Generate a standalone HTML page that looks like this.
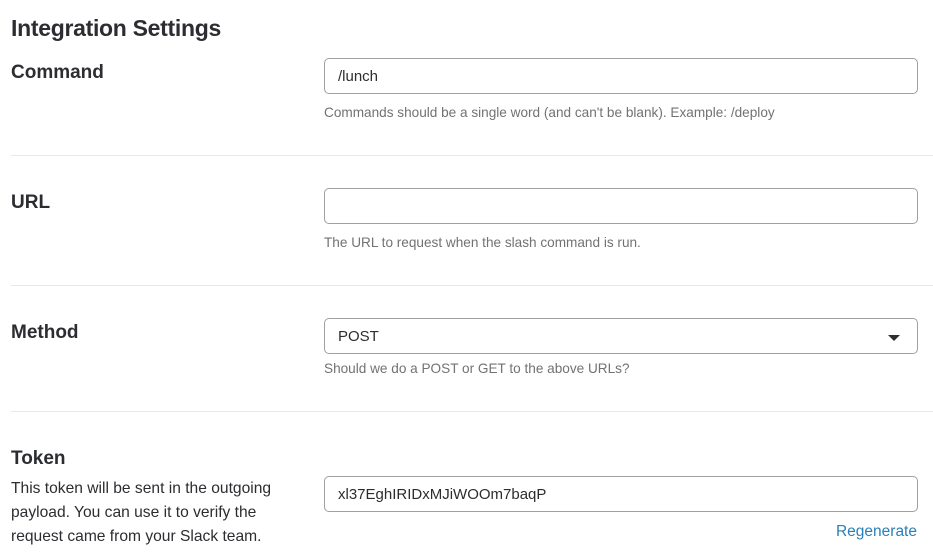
<!DOCTYPE html>
<html><head><style>
body{margin:0;width:933px;height:555px;background:#fff;font-family:"Liberation Sans",sans-serif;color:#2c2d30;position:relative;overflow:hidden}
.a{position:absolute;white-space:nowrap}
h1{position:absolute;left:11px;top:15px;margin:0;font-size:23px;font-weight:bold;letter-spacing:-0.3px}
.l{font-size:19px;font-weight:bold;left:11px}
.in{position:absolute;left:324px;width:594px;border:1px solid #a0a0a2;border-radius:5px;box-sizing:border-box;height:36px;font-size:15px;line-height:36px;padding-left:13px}
.h{font-size:13.6px;color:#717274;left:324px}
.d{position:absolute;left:11px;right:0;height:1px;background:#e8e8e8}
.t{font-size:15.6px;left:11px;line-height:24px}
</style></head><body>
<h1>Integration Settings</h1>
<div class="a l" style="top:62px">Command</div>
<div class="in" style="top:58px">/lunch</div>
<div class="a h" style="top:105px">Commands should be a single word (and can't be blank). Example: /deploy</div>
<div class="d" style="top:155px"></div>
<div class="a l" style="top:192px">URL</div>
<div class="in" style="top:188px"></div>
<div class="a h" style="top:235px">The URL to request when the slash command is run.</div>
<div class="d" style="top:285px"></div>
<div class="a l" style="top:322px">Method</div>
<div class="in" style="top:318px">POST<div style="position:absolute;right:17px;top:16px;width:0;height:0;border-left:6px solid transparent;border-right:6px solid transparent;border-top:6px solid #2c2d30"></div></div>
<div class="a h" style="top:361px">Should we do a POST or GET to the above URLs?</div>
<div class="d" style="top:411px"></div>
<div class="a l" style="top:448px">Token</div>
<div class="a t" style="top:477px">This token will be sent in the outgoing<br>payload. You can use it to verify the<br>request came from your Slack team.</div>
<div class="in" style="top:476px">xl37EghIRIDxMJiWOOm7baqP</div>
<div class="a" style="right:16px;top:523px;font-size:15.5px;color:#2a80b9">Regenerate</div>
</body></html>
